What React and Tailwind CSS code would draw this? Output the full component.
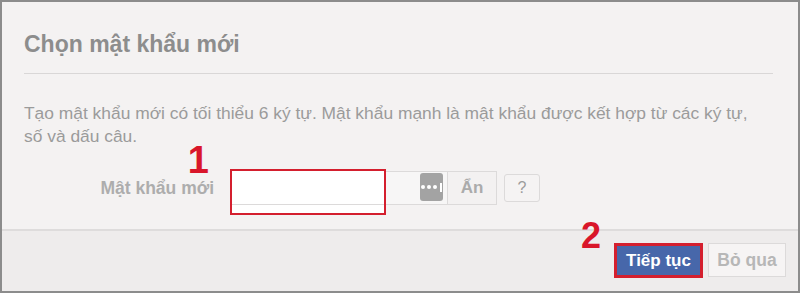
import React from 'react'

const FONT = { fontFamily: '"Liberation Sans", Arial, sans-serif' }

function KeyIcon() {
  // password-manager dots badge inside the input
  return (
    <div className="absolute right-[4px] top-[1px] w-[23px] h-[28px] rounded-[3px] bg-[#a3a3a3] flex items-center justify-center gap-[2px]">
      <span className="w-[4px] h-[4px] rounded-full bg-white" />
      <span className="w-[4px] h-[4px] rounded-full bg-white" />
      <span className="w-[4px] h-[4px] rounded-full bg-white" />
      <span className="w-[1.5px] h-[9px] bg-white ml-[1px]" />
    </div>
  )
}

export default function App() {
  return (
    <div
      className="w-[800px] h-[293px] border-2 border-[#8c8c8c] bg-[#f4f2f2] flex flex-col relative overflow-hidden"
      style={FONT}
    >
      {/* Header */}
      <div className="mx-[22px] mr-[25px] pt-[29px] pb-[16px] border-b border-[#d9d7d7]">
        <h2 className="text-[23px] leading-[26px] font-bold text-[#8d8d8d]">Chọn mật khẩu mới</h2>
      </div>

      {/* Body */}
      <div className="px-[22px] pt-[28px] flex-1">
        <p className="text-[17.4px] leading-[23px] text-[#9b9b9b] whitespace-nowrap">
          Tạo mật khẩu mới có tối thiểu 6 ký tự. Mật khẩu mạnh là mật khẩu được kết hợp từ các ký tự,
          <br />
          số và dấu câu.
        </p>

        <div className="flex items-center mt-[23px]">
          <label className="w-[190px] text-right text-[17.5px] font-bold text-[#adadad] relative">
            Mật khẩu mới
            <span className="absolute right-[5px] -top-[37px] text-[38px] leading-[44px] font-bold text-[#d9162a]">1</span>
          </label>

          <div className="ml-[18px] flex">
            <div className="relative w-[216px] h-[34px] border border-[#dcdada] bg-[#f7f6f6]">
              <div className="absolute -left-[3px] -top-[3px] w-[156px] h-[46px] border-2 border-[#d41f2e] bg-white">
                <div className="absolute left-0 right-0 top-[33px] h-px bg-[#dcdada]" />
              </div>
              <KeyIcon />
            </div>
            <button className="w-[49px] h-[34px] border border-l-0 border-[#dcdada] bg-[#f3f1f1] text-[17px] font-bold text-[#ababab]">
              Ẩn
            </button>
          </div>

          <button className="ml-[7px] w-[36px] h-[28px] border border-[#dcdada] rounded-[3px] bg-[#f5f3f3] text-[16px] text-[#9c9c9c]">
            ?
          </button>
        </div>
      </div>

      {/* Footer */}
      <div className="h-[62px] border-t-2 border-[#dedcdc] bg-[#eeecec] flex items-start justify-end pt-[12px] pr-[12px] gap-[5px] relative">
        <span className="absolute left-[579px] -top-[15px] text-[36px] leading-[40px] font-bold text-[#d9162a]">2</span>
        <div className="border-[3px] border-[#d41f2e] p-0">
          <button className="w-[83px] h-[29px] bg-[#4767aa] text-white text-[17px] font-bold">Tiếp tục</button>
        </div>
        <button className="w-[78px] h-[34px] border border-[#dcdada] bg-[#f6f4f4] text-[17.5px] font-bold text-[#b7b7b7]">
          Bỏ qua
        </button>
      </div>
    </div>
  )
}
